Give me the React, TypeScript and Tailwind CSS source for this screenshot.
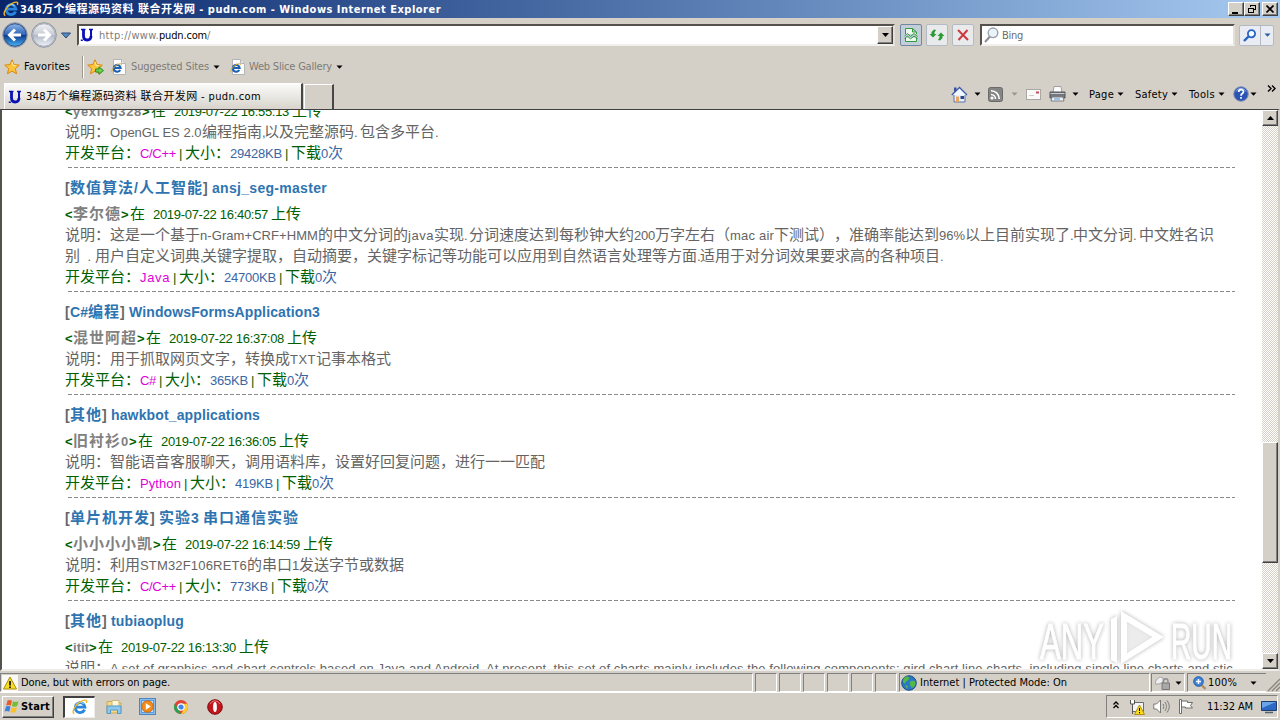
import type { ReactNode } from "react";

const uiFont = "font-['DejaVu_Sans_Condensed','Noto_Sans_CJK_SC',sans-serif]";
const pageFont = "font-['Liberation_Sans','Noto_Sans_CJK_SC',sans-serif]";
const raised = "bg-[#d4d0c8] border border-t-white border-l-white border-r-[#404040] border-b-[#404040] shadow-[inset_-1px_-1px_0_#808080]";
const sunken = "border border-t-[#808080] border-l-[#808080] border-r-white border-b-white";

const uiFamily = '"DejaVu Sans Condensed", "Noto Sans CJK SC", sans-serif';
const pageFamily = '"Liberation Sans", "Noto Sans CJK SC", sans-serif';
const ctx = document.createElement("canvas").getContext("2d")!;

// letter spacing that makes the text exactly `w` pixels wide
const spacing = (text: string, font: string, w: number) => {
    ctx.font = font;
    return (w - ctx.measureText(text).width) / text.length;
};

type RunProps = { t: string; w: number; size?: number; bold?: boolean; ui?: boolean; className?: string };

const Run = ({ t, w, size = 13, bold = false, ui = false, className = "" }: RunProps) => {
    const font = `${bold ? "bold " : ""}${size}px ${ui ? uiFamily : pageFamily}`;
    return (
        <span
            className={`inline-block whitespace-pre shrink-0 ${bold ? "font-bold" : ""} ${className}`}
            style={{ width: w, fontSize: size, letterSpacing: spacing(t, font, w) }}
        >
            {t}
        </span>
    );
};

const Label = (props: RunProps) => <Run ui size={11} {...props} />;

const Arrow = ({ big = false, className = "" }: { big?: boolean; className?: string }) => (
    <svg className={`shrink-0 ${className}`} width="7" height="4" viewBox="0 0 7 4" fill="currentColor">
        <path d={big ? "M0 0h7L3.500 4z" : "M.5 .5h6L3.500 3.700z"} />
    </svg>
);

const IeIcon = ({ size = 16, className = "" }: { size?: number; className?: string }) => (
    <svg className={`shrink-0 ${className}`} width={size} height={size} viewBox="0 0 16 16" fill="none">
        <path d="M12.600 10.600A4.900 4.900 0 1 1 13 8.200H4.500" stroke="#2a86dc" strokeWidth="2.800" />
        <path d="M11.600 4.900A4.600 4.600 0 0 0 4 6" stroke="#8ad0fa" strokeWidth="1.200" />
        <path d="M2.300 14.600C-.8 13 3 6 8 3c4-2.600 8-2.800 6.300 1" stroke="#f0b62c" strokeWidth="1.400" />
    </svg>
);

const IePage = ({ className = "" }: { className?: string }) => (
    <svg className={`shrink-0 ${className}`} width="15" height="16" viewBox="0 0 15 16">
        <path d="M2.500 .5h8l4 4v11h-12z" fill="#fdfdfd" stroke="#b4b4b4" />
        <path d="M10.500 .5v4h4" fill="#e4e4e4" stroke="#b4b4b4" />
        <path d="M9.200 11A3.400 3.400 0 1 1 9.600 9H3.600" fill="none" stroke="#1c62b4" strokeWidth="2.200" />
        <path d="M1 13.300C0 11.500 3 7.500 6 5.800c3-1.600 5-1.400 4.300.5" fill="none" stroke="#e8ac28" />
    </svg>
);

const PudnIcon = ({ className = "" }: { className?: string }) => (
    <svg className={`shrink-0 ${className}`} width="14" height="14" viewBox="0 0 14 14" fill="none" stroke="#0c10b4">
        <path d="M3.500 1.500V8c0 3 1.500 4 3.500 4s4-1.200 4-4" strokeWidth="2.800" />
        <path d="M11 9V1.500" strokeWidth="2" />
        <path d="M1 1.500h4.500M9 1.500h4M.8 12.300h2" strokeWidth="1.400" />
    </svg>
);

const Star = ({ add = false, className = "" }: { add?: boolean; className?: string }) => (
    <svg className={`shrink-0 ${className}`} width="17" height="16" viewBox="0 0 17 16">
        <path d="M8 .8l2.100 4.800 5.200.5-3.900 3.500 1.100 5.200L8 12.100l-4.500 2.700 1.100-5.200L.7 6.100l5.200-.5z" fill="#fcc43c" stroke="#d98a10" />
        <path d="M8 3l1.200 3.400 3 .4" stroke="#fff0b0" fill="none" />
        {add && <path d="M8.500 10h3.500V7.800l4.500 3.800-4.500 3.700V13H8.500z" fill="#6ccf4e" stroke="#2c8f20" />}
    </svg>
);

const NavButton = ({ active = false, className = "" }: { active?: boolean; className?: string }) => (
    <svg className={`shrink-0 ${className}`} width="26" height="26" viewBox="0 0 26 26">
        <defs>
            <linearGradient id={active ? "navOn" : "navOff"} x1="0" y1="0" x2="0" y2="1">
                <stop offset="0" stopColor={active ? "#8fb4e4" : "#f2f3f6"} />
                <stop offset=".48" stopColor={active ? "#2f66b8" : "#c6ccd6"} />
                <stop offset=".52" stopColor={active ? "#0c3a90" : "#b2bac8"} />
                <stop offset="1" stopColor={active ? "#4cb4f4" : "#eef2f8"} />
            </linearGradient>
        </defs>
        <circle cx="13" cy="13" r="12.300" fill="#dcdfe6" stroke="#8c92a0" />
        <circle cx="13" cy="13" r="11.300" fill={active ? "url(#navOn)" : "url(#navOff)"} stroke={active ? "#274a84" : "#a4a8b4"} />
        <path
            d={active ? "M19 13H8M13 7.500L7.500 13l5.500 5.500" : "M7 13h11M13 7.500l5.500 5.500-5.500 5.500"}
            fill="none"
            stroke="#fff"
            strokeWidth="3"
        />
    </svg>
);

const ToolButton = ({ pressed = false, className = "", children }: { pressed?: boolean; className?: string; children: ReactNode }) => (
    <div className={`w-[22px] h-[22px] shrink-0 flex items-center justify-center rounded-[2px] border ${pressed ? "bg-[#c3cedb] border-[#71879f]" : "bg-[#e9eaec] border-[#b3bac4]"} ${className}`}>
        {children}
    </div>
);

const TitleBar = () => (
    <header className="h-[18px] flex items-center bg-linear-to-r from-[#0a246a] to-[#a6caf0] text-white">
        <IeIcon className="ml-[3px]" />
        <Label t="348万个编程源码资料 联合开发网 - pudn.com - Windows Internet Explorer" w={421} bold className="ml-px" />
        <div className="ml-auto mr-[2px] flex text-black">
            <div className={`w-4 h-[14px] ${raised}`}>
                <div className="w-[6px] h-[2px] bg-black mt-[9px] ml-[3px]" />
            </div>
            <div className={`w-4 h-[14px] flex items-center justify-center ${raised}`}>
                <svg width="10" height="10" viewBox="0 0 10 10" fill="none" stroke="#000" shapeRendering="crispEdges">
                    <path d="M3.500 3V1.500h5v4H7M3 1h6M1.500 4.500h5v4h-5zM1 4h6" />
                </svg>
            </div>
            <div className={`w-4 h-[14px] ml-[2px] flex items-center justify-center ${raised}`}>
                <svg width="8" height="8" viewBox="0 0 8 8" stroke="#000" strokeWidth="1.600">
                    <path d="M.5.5l7 7M7.500.5l-7 7" />
                </svg>
            </div>
        </div>
    </header>
);

const AddressBar = () => (
    <div className="h-[34px] flex items-center">
        <NavButton active className="ml-[2px]" />
        <NavButton className="ml-[3px]" />
        <svg className="ml-1 shrink-0" width="10" height="7" viewBox="0 0 10 7">
            <path d="M.5 1h9L5 6z" fill="#5a8cc0" stroke="#234a78" />
        </svg>
        <div className="ml-[6px] w-[818px] h-[22px] shrink-0 flex items-center bg-white border-2 border-t-[#55524e] border-l-[#55524e] border-r-[#e4e0d8] border-b-[#f2f0ec]">
            <PudnIcon className="ml-px" />
            <Label t="http://www." w={60} className="ml-[5px] text-[#7c7c7c]" />
            <Label t="pudn.com" w={48} />
            <Label t="/" w={4} className="text-[#7c7c7c]" />
            <div className={`ml-auto w-4 h-[18px] flex items-center justify-center ${raised}`}>
                <Arrow big />
            </div>
        </div>
        <ToolButton pressed className="ml-[5px]">
            <svg width="14" height="16" viewBox="0 0 14 16" fill="none" stroke="#329a3c">
                <path d="M1.500 7V1.500h7l4 3.500v2M8.500 1.500V5h4M1.500 11v3.500h11V11" fill="#eef8ee" />
                <path d="M.5 9l3-2.500 3 3 3.500-3 3.500 3M.5 11.500l3-2.500 3 3 3.500-3 3.500 2.500" />
            </svg>
        </ToolButton>
        <ToolButton className="ml-1">
            <svg width="16" height="14" viewBox="0 0 16 14" fill="#2c9a34">
                <path d="M5 1.500L2.500 4v2H.5L4 9.500 7.500 6h-2V4.500L7 2z" />
                <path d="M11 12.500l2.500-2.500V8h2L12 4.500 8.500 8h2v1.500L9 12z" />
            </svg>
        </ToolButton>
        <ToolButton className="ml-1">
            <svg width="12" height="12" viewBox="0 0 12 12" stroke="#cc3a40" strokeWidth="2">
                <path d="M1 1l10 10M10.500 1L1.500 11" />
            </svg>
        </ToolButton>
        <div className="ml-[6px] w-[255px] h-[22px] shrink-0 flex items-center bg-white border-2 border-t-[#55524e] border-l-[#55524e] border-r-[#e4e0d8] border-b-[#f2f0ec]">
            <svg className="ml-[2px]" width="15" height="16" viewBox="0 0 15 16" fill="none">
                <path d="M6 9.500L1 15" stroke="#8c8c94" strokeWidth="2" />
                <circle cx="9" cy="5.800" r="4.800" fill="#eaf2fa" stroke="#9aa2ac" strokeWidth="1.400" />
            </svg>
            <Label t="Bing" w={21} className="ml-[3px] text-[#6c6c6c]" />
        </div>
        <div className="ml-1 w-[35px] h-[21px] shrink-0 flex items-center rounded-[2px] border border-[#b3bac4] bg-[#e9edf3]">
            <svg className="ml-[3px]" width="14" height="13" viewBox="0 0 14 13" fill="none" stroke="#2563c4">
                <path d="M5.500 7.500L1 12" strokeWidth="2.400" />
                <circle cx="8.500" cy="4.700" r="3.600" strokeWidth="1.800" fill="#f8fbff" />
            </svg>
            <div className="ml-[3px] h-full w-px bg-[#b3bac4]" />
            <Arrow className="ml-[3px] text-[#2a5ca4]" />
        </div>
    </div>
);

const FavoritesBar = () => (
    <div className="h-[30px] pb-px flex items-center">
        <Star className="ml-1" />
        <Label t="Favorites" w={46} className="ml-[3px]" />
        <div className="ml-3 w-[2px] h-[22px] bg-[#9c9890] border-r border-white" />
        <Star add className="ml-[3px]" />
        <IePage className="ml-[7px]" />
        <Label t="Suggested Sites" w={78} className="ml-[5px] text-[#7e7b76]" />
        <Arrow className="ml-1" />
        <IePage className="ml-[10px]" />
        <Label t="Web Slice Gallery" w={83} className="ml-1 text-[#7e7b76]" />
        <Arrow className="ml-1" />
    </div>
);

const TabBar = () => (
    <div className="h-[27px] flex">
        <div className="ml-1 mt-[1px] w-[299px] h-[26px] flex items-center border-t border-l border-white border-r-2 border-r-[#484644] bg-linear-to-b from-[#fbfbfa] to-[#d8d4cc]">
            <PudnIcon className="ml-[3px]" />
            <Label t="348万个编程源码资料 联合开发网 - pudn.com" w={235} className="ml-1" />
        </div>
        <div className="ml-px mt-[2px] w-[30px] h-[25px] border-t border-l border-white border-r-2 border-r-[#484644]" />
        <div className="ml-[617px] flex items-center pb-[3px]">
            <svg width="17" height="17" viewBox="0 0 17 17">
                <path d="M3 8v8h11V8" fill="#e8eef8" stroke="#5c74a8" />
                <path d="M3 1.500h2.500v4H3z" fill="#3a4ea0" />
                <path d="M.8 9L8.500 1.500 16 9" fill="#f4f8ff" stroke="#3c5ca8" strokeWidth="1.400" />
                <path d="M5 10.500h3V16H5z" fill="#e8a860" />
                <path d="M9.500 10h3.500v3H9.500z" fill="#28488c" />
            </svg>
            <Arrow className="ml-[6px]" />
            <svg className="ml-[7px]" width="15" height="15" viewBox="0 0 15 15" fill="none" stroke="#fff" strokeWidth="1.600">
                <rect x=".5" y=".5" width="14" height="14" rx="2" fill="#858585" stroke="#6a6a6a" strokeWidth="1" />
                <path d="M3 7.500A4.500 4.500 0 0 1 7.500 12M3 3.700A8.300 8.300 0 0 1 11.300 12" />
                <circle cx="4" cy="11" r=".8" fill="#fff" />
            </svg>
            <Arrow className="ml-[8px] text-[#9a968e]" />
            <svg className="ml-[8px]" width="15" height="11" viewBox="0 0 15 11">
                <rect x=".5" y=".5" width="14" height="10" fill="#fbfafa" stroke="#aaa6a2" />
                <path d="M10 2.500h3v2h-3z" fill="#c84860" />
                <path d="M3 6.500h5" stroke="#ccc" />
            </svg>
            <svg className="ml-[8px]" width="17" height="16" viewBox="0 0 17 16">
                <path d="M5 .5h7l1 6H4z" fill="#fdfdfd" stroke="#a0a0a0" />
                <path d="M1 6h15v6H1z" fill="#74787c" stroke="#505458" />
                <path d="M1.500 7.500h14" stroke="#c8ccd0" />
                <path d="M3 11h11l1 4H2z" fill="#eef2f6" stroke="#7c8084" />
                <path d="M5 13h6" stroke="#4a90d8" />
            </svg>
            <Arrow className="ml-[6px]" />
            <Label t="Page" w={25} className="ml-[10px]" />
            <Arrow className="ml-[3px]" />
            <Label t="Safety" w={33} className="ml-[11px]" />
            <Arrow className="ml-[3px]" />
            <Label t="Tools" w={26} className="ml-[11px]" />
            <Arrow className="ml-[3px]" />
            <svg className="ml-[8px]" width="16" height="16" viewBox="0 0 16 16">
                <circle cx="8" cy="8" r="7.300" fill="#2c54b4" stroke="#8894b4" />
                <path d="M3 5.500a5.500 5.500 0 0 1 10 0" stroke="#90b0ec" fill="none" />
                <path d="M5.700 6c0-3.200 4.800-3 4.800-.3C10.500 7.600 8 7.500 8 9.700M8 11v1.800" stroke="#fff" strokeWidth="1.700" fill="none" />
            </svg>
            <Arrow className="ml-px" />
        </div>
        <svg className="ml-[10px] mt-[3px]" width="9" height="7" viewBox="0 0 9 7" fill="none" stroke="#000" strokeWidth="1.400">
            <path d="M1 .5l3 3-3 3M5 .5l3 3-3 3" />
        </svg>
    </div>
);

type Piece = string | [string, number];

type Entry = {
    cat?: Piece[];
    title?: Piece[];
    author: Piece[];
    date: string;
    desc: Piece[][];
    lang?: [string, number];
    size?: [string, number];
};

const entries: Entry[] = [
    {
        author: [["yexing328", 69]],
        date: "2019-07-22 16:55:13",
        desc: [[["OpenGL ES 2.0", 92], "编程指南", [",", 2], "以及完整源码", [". ", 6], "包含多平台", [".", 4]]],
        lang: ["C/C++", 36],
        size: ["29428KB", 52],
    },
    {
        cat: ["数值算法", ["/", 5], "人工智能"],
        title: [["ansj_seg-master", 115]],
        author: ["李尔德"],
        date: "2019-07-22 16:40:57",
        desc: [
            ["这是一个基于", ["n-Gram+CRF+HMM", 118], "的中文分词的", ["java", 26], "实现", [". ", 5], "分词速度达到每秒钟大约", ["200", 21], "万字左右（", ["mac air", 44], "下测试）", "，准确率能达到", ["96%", 26], "以上目前实现了", [".", 3], "中文分词", [". ", 6], "中文姓名识"],
            ["别", ["  . ", 15], "用户自定义词典", [",", 2], "关键字提取，自动摘要，关键字标记等功能可以应用到自然语言处理等方面", [".", 3], "适用于对分词效果要求高的各种项目", [".", 4]],
        ],
        lang: ["Java", 30],
        size: ["24700KB", 52],
    },
    {
        cat: [["C#", 18], "编程"],
        title: [["WindowsFormsApplication3", 191]],
        author: ["混世阿超"],
        date: "2019-07-22 16:37:08",
        desc: [["用于抓取网页文字，转换成", ["TXT", 26], "记事本格式"]],
        lang: ["C#", 16],
        size: ["365KB", 38],
    },
    {
        cat: ["其他"],
        title: [["hawkbot_applications", 149]],
        author: ["旧衬衫", ["0", 8]],
        date: "2019-07-22 16:36:05",
        desc: [["智能语音客服聊天，调用语料库，设置好回复问题，进行一一匹配"]],
        lang: ["Python", 41],
        size: ["419KB", 38],
    },
    {
        cat: ["单片机开发"],
        title: ["实验", ["3 ", 12], "串口通信实验"],
        author: ["小小小小凯"],
        date: "2019-07-22 16:14:59",
        desc: [["利用", ["STM32F106RET6", 107], "的串口", ["1", 7], "发送字节或数据"]],
        lang: ["C/C++", 36],
        size: ["773KB", 38],
    },
    {
        cat: ["其他"],
        title: [["tubiaoplug", 73]],
        author: [["itit", 16]],
        date: "2019-07-22 16:13:30",
        desc: [[["A set of graphics and chart controls based on Java and Android. At present, this set of charts mainly includes the following components: gird chart,line charts, including single line charts and stic", 1125]]],
    },
];

const Pieces = ({ items, bold = false, size = 13 }: { items: Piece[]; bold?: boolean; size?: number }) => (
    <>
        {items.map((p, i) =>
            typeof p === "string" ? (
                <Run key={i} t={p} w={p.length * (bold ? 16 : 15)} size={15} bold={bold} />
            ) : (
                <Run key={i} t={p[0]} w={p[1]} size={size} bold={bold} />
            )
        )}
    </>
);

const rowStyle = "h-[21px] flex items-baseline leading-[19px] whitespace-nowrap";

const EntryBlock = ({ cat, title, author, date, desc, lang, size }: Entry) => (
    <article>
        {cat && title && (
            <h2 className={`mt-[10px] mb-[5px] text-[#2e74b0] ${rowStyle}`}>
                <Run t="[" w={5} size={14} bold className="text-[#666]" />
                <Pieces items={cat} bold size={14} />
                <Run t="] " w={9} size={14} bold className="text-[#666]" />
                <Pieces items={title} bold size={14} />
            </h2>
        )}
        <div className={`text-[#006000] ${rowStyle}`}>
            <Run t="<" w={8} bold />
            <span className="flex items-baseline text-[#808080]">
                <Pieces items={author} bold />
            </span>
            <Run t="> " w={9} bold />
            <Run t="在" w={15} size={15} />
            <Run t={date} w={115} className="ml-2" />
            <Run t="上传" w={30} size={15} className="ml-[3px]" />
        </div>
        {desc.map((line, i) => (
            <p key={i} className={`text-[#646464] ${rowStyle}`}>
                {i === 0 && <Run t="说明：" w={45} size={15} />}
                <Pieces items={line} />
            </p>
        ))}
        {lang && size && (
            <>
                <div className={`text-[#006000] ${rowStyle}`}>
                    <Run t="开发平台：" w={75} size={15} />
                    <Run t={lang[0]} w={lang[1]} className="text-[#e000d8]" />
                    <Run t="|" w={4} className="ml-[3px] mr-[2px]" />
                    <Run t="大小：" w={45} size={15} />
                    <Run t={size[0]} w={size[1]} className="text-[#3a66a4]" />
                    <Run t="|" w={4} className="ml-[3px] mr-[2px]" />
                    <Run t="下载" w={30} size={15} />
                    <Run t="0" w={7} className="text-[#3a66a4]" />
                    <Run t="次" w={15} size={15} className="text-[#3a66a4]" />
                </div>
                <div className="mt-[3px] ml-[3px] h-px bg-[repeating-linear-gradient(90deg,#8a8a8a_0_4px,transparent_4px_6px)]" />
            </>
        )}
    </article>
);

const checker = "bg-[#e9e7e3] bg-[repeating-conic-gradient(#d4d0c8_0_25%,#ffffff_0_50%)] bg-[length:2px_2px]";

const ScrollBar = () => (
    <div className={`w-4 h-full shrink-0 flex flex-col ${checker}`}>
        <div className={`h-4 flex items-center justify-center ${raised}`}>
            <Arrow big className="rotate-180" />
        </div>
        <div className={`mt-[316px] h-[121px] ${raised}`} />
        <div className={`mt-auto h-4 flex items-center justify-center ${raised}`}>
            <Arrow big />
        </div>
    </div>
);

const Watermark = () => (
    <svg
        className="absolute left-[1034px] top-[604px] drop-shadow-[0_0_2px_rgba(0,0,0,0.4)]"
        width="204"
        height="66"
        viewBox="0 0 204 66"
        fill="none"
        opacity=".8"
    >
        <g fill="#fff" stroke="#fff" fontFamily="Liberation Sans Narrow, Liberation Sans, sans-serif" fontSize="50">
            <text x="6" y="55" textLength="64" lengthAdjust="spacingAndGlyphs">ANY</text>
            <text x="137" y="55" textLength="61" lengthAdjust="spacingAndGlyphs">RUN</text>
        </g>
        <path d="M77 56V15l6-3v47zM87 7l43 26-43 27zM93 18v31l25-16z" fill="#fff" fillRule="evenodd" />
        <path d="M93 18v31l25-16z" fill="#fff" opacity=".6" />
    </svg>
);

const Viewport = () => (
    <main className="h-[562px] flex border-t border-t-[#404040] border-l-2 border-l-[#55524e] border-b-2 border-b-[#efede9] border-r-2 border-r-[#d4d0c8] bg-white overflow-hidden">
        <div className={`flex-1 min-w-0 h-full overflow-hidden pl-[63px] pr-[24px] ${pageFont}`}>
            <div className="-mt-[9px] w-[1170px]">
                {entries.map((entry) => (
                    <EntryBlock key={entry.date} {...entry} />
                ))}
            </div>
        </div>
        <ScrollBar />
    </main>
);

const StatusBar = () => (
    <footer className="h-[22px] pt-[2px] flex border-b border-white">
        <div className={`w-[753px] h-[19px] flex items-center ${sunken}`}>
            <svg className="ml-px" width="16" height="16" viewBox="0 0 16 16">
                <path d="M0 0h16v16H0z" fill="#faf9f4" />
                <path d="M8 2l6.500 12h-13z" fill="#f8dc20" stroke="#a88c10" />
                <path d="M8 6v4.500M8 11.500v1.500" stroke="#000" strokeWidth="1.600" />
            </svg>
            <Label t="Done, but with errors on page." w={149} className="ml-[3px]" />
        </div>
        {[0, 1, 2, 3, 4, 5].map((i) => (
            <div key={i} className={`ml-[2px] w-[22px] h-[19px] ${sunken}`} />
        ))}
        <div className={`ml-[2px] w-[251px] h-[19px] flex items-center ${sunken}`}>
            <svg className="ml-px" width="16" height="16" viewBox="0 0 16 16">
                <circle cx="8" cy="8" r="7.300" fill="#2c78c8" stroke="#1c4c84" />
                <path d="M3 3c3-3 6-1 5 1S5 6 4 8 1 6 3 3zM10 6c3-1 5 0 4.500 3S11 14 10 12s-2-5 0-6zM4 10l3 1-1 3z" fill="#54b848" />
            </svg>
            <Label t="Internet | Protected Mode: On" w={147} className="ml-[3px]" />
        </div>
        <div className={`ml-px w-[34px] h-[19px] flex items-center ${sunken}`}>
            <svg className="ml-[3px]" width="15" height="15" viewBox="0 0 15 15">
                <path d="M0 9C1 3 5 1 8 3v4L4 9z" fill="#efeff0" stroke="#a4a4a4" />
                <path d="M8.500 8V6c0-3 4.500-3 4.500 0v2" stroke="#8c8c8c" fill="none" strokeWidth="1.300" />
                <path d="M7 8h7.500v6.500H7z" fill="#a8a8a8" stroke="#787878" />
            </svg>
            <Arrow className="ml-[5px]" />
        </div>
        <div className={`ml-[2px] w-[79px] h-[19px] flex items-center border-r-0 ${sunken}`}>
            <svg className="ml-[5px]" width="14" height="14" viewBox="0 0 14 14">
                <path d="M8.500 9l4 4" stroke="#b48c60" strokeWidth="2.400" />
                <circle cx="5.500" cy="5.500" r="4.800" fill="#3c84dc" stroke="#2458a4" />
                <path d="M3 5.500h5M5.500 3v5" stroke="#fff" strokeWidth="1.400" />
            </svg>
            <Label t="100%" w={29} className="ml-px" />
            <Arrow className="ml-[13px]" />
        </div>
        <svg className="ml-auto mt-1" width="13" height="15" viewBox="0 0 13 15" stroke="#8c8880" strokeWidth="1.500">
            <path d="M1 14L13 2M5 14l8-8M9 14l4-4" />
        </svg>
    </footer>
);

const TaskBar = () => (
    <nav className="h-[27px] flex items-center">
        <div className={`ml-[2px] w-[52px] h-[22px] flex items-center ${raised}`}>
            <svg className="ml-px" width="16" height="15" viewBox="0 0 16 15">
                <path d="M3.500 1.500c1.500-1 3-.7 4.500.2L6.800 6.700C5.300 5.800 4 5.700 2.200 6.500z" fill="#e85c2c" />
                <path d="M9 2.200c1.800.9 3.400.9 5.500 0L13.200 7c-2 .9-3.500.8-5.300 0z" fill="#78bc34" />
                <path d="M2 7.500c1.700-.8 3-.7 4.500.2L5.200 12.700C3.700 11.800 2.200 11.700.6 12.500z" fill="#3c80dc" />
                <path d="M7.500 8.200c1.800.9 3.400.9 5.500 0L11.700 13c-2 .9-3.500.8-5.300 0z" fill="#fcc028" />
            </svg>
            <Label t="Start" w={29} bold className="ml-px" />
        </div>
        <div className="ml-[9px] w-8 h-[22px] flex items-center justify-center bg-white border border-t-2 border-l-2 border-t-[#404040] border-l-[#404040] border-r-[#efede9] border-b-[#efede9]">
            <IeIcon />
        </div>
        <svg className="ml-[11px]" width="16" height="16" viewBox="0 0 16 16">
            <path d="M1 2.500h5l1 1.500h8v10H1z" fill="#f4d888" stroke="#cca850" />
            <path d="M6 1.500h7v6H6z" fill="#fdf6d8" stroke="#c8b880" />
            <path d="M1 7h14v7.500h-3.500V11h-7v3.500H1z" fill="#8cc8ec" stroke="#5498c8" />
        </svg>
        <svg className="ml-[17px]" width="17" height="17" viewBox="0 0 17 17">
            <rect x=".5" y=".5" width="16" height="16" fill="#8cbcec" stroke="#4c84c4" />
            <rect x="2.500" y="2.500" width="12" height="12" fill="#b8dcf8" stroke="#5c9cd8" />
            <circle cx="8.500" cy="8.500" r="5.700" fill="#f48c1c" stroke="#cc6808" />
            <path d="M6.800 5.200l5 3.300-5 3.300z" fill="#fff" />
        </svg>
        <svg className="ml-[17px]" width="16" height="16" viewBox="0 0 16 16">
            <circle cx="8" cy="8" r="7" fill="#e04438" />
            <path d="M1.900 4.500L6 11.500 8 15A7 7 0 0 1 1.900 4.500z" fill="#2ca050" />
            <path d="M8 15l3.300-5.500L8 4.700h6.200A7 7 0 0 1 8 15z" fill="#fccc30" />
            <circle cx="8" cy="8" r="3.200" fill="#4484f0" stroke="#fff" strokeWidth="1.200" />
        </svg>
        <svg className="ml-[18px]" width="16" height="16" viewBox="0 0 16 16">
            <circle cx="8" cy="8" r="7.300" fill="#c4141c" stroke="#7c0c10" />
            <path d="M3 5a5.500 5.500 0 0 1 10 0" stroke="#e87c7c" fill="none" />
            <ellipse cx="8" cy="8" rx="1.900" ry="5" fill="#fff" />
        </svg>
        <div className={`ml-auto mr-[2px] w-[172px] h-[23px] flex items-center ${sunken}`}>
            <svg className="ml-[6px] mb-[3px]" width="6" height="8" viewBox="0 0 6 8" fill="none" stroke="#000" strokeWidth="1.300">
                <path d="M.5 3.500L3 1l2.500 2.500M.5 7L3 4.500 5.500 7" />
            </svg>
            <svg className="ml-[10px]" width="16" height="16" viewBox="0 0 16 16">
                <path d="M3.500 3.500h11v9h-11z" fill="#f4f4f4" stroke="#6c6c6c" />
                <path d="M1.500 1v4h4V1M3.500 5v10" stroke="#545454" fill="#fff" />
                <path d="M10.500 6l5 9.500h-10z" fill="#f8dc20" stroke="#b09010" />
                <path d="M10.500 9v3M10.500 13v1.300" stroke="#000" />
            </svg>
            <svg className="ml-[8px]" width="17" height="15" viewBox="0 0 17 15" stroke="#7c7974" fill="none">
                <path d="M.8 5h2.700l4-4v13l-4-4H.8z" fill="#fff" />
                <path d="M10 5c1 1.500 1 3.500 0 5M12 3c2 3 2 6 0 9M14 1.500c3 4 3 8 0 12" />
            </svg>
            <svg className="ml-[8px]" width="16" height="15" viewBox="0 0 16 15" stroke="#706d68" fill="#fff">
                <path d="M1.500.500h2v14h-2zM3.500 2h6v1.500h5l-2 3 2 2.500h-7V8h-4z" />
            </svg>
            <Label t="11:32 AM" w={46} className="ml-[13px]" />
            <svg className="ml-[8px]" width="16" height="14" viewBox="0 0 16 14">
                <path d="M.5 1.500h15v9H.5z" fill="#2c68c4" stroke="#1c3c74" />
                <path d="M1 2h14L1 8z" fill="#6ca4e8" />
                <path d="M4 12.500h8" stroke="#54606c" strokeWidth="1.500" />
            </svg>
        </div>
    </nav>
);

const App = () => {
    return (
        <div className={`relative w-[1280px] h-[720px] overflow-hidden bg-[#d4d0c8] text-black leading-none ${uiFont}`}>
            <TitleBar />
            <AddressBar />
            <FavoritesBar />
            <TabBar />
            <Viewport />
            <StatusBar />
            <TaskBar />
            <Watermark />
        </div>
    );
};

export default App;
